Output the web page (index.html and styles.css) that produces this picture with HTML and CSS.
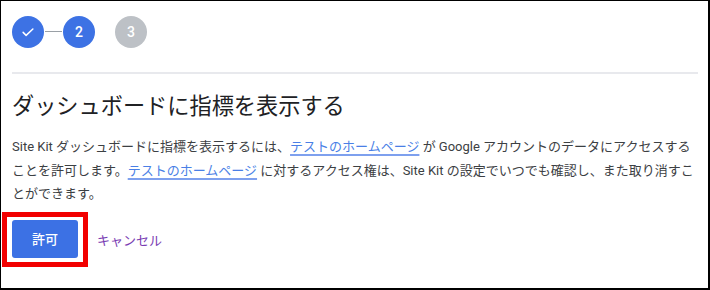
FILE: index.html
```html
<!DOCTYPE html>
<html lang="ja">
<head>
<meta charset="utf-8">
<link rel="stylesheet" href="styles.css">
</head>
<body>
<div class="frame">
  <div class="stepper">
    <div class="step step-done">
      <svg width="18" height="18" viewBox="0 0 24 24"><path d="M5.5 12.5l4 4L18.5 8" fill="none" stroke="#fff" stroke-width="2" stroke-linecap="round" stroke-linejoin="round"/></svg>
    </div>
    <div class="step-line"></div>
    <div class="step step-active">2</div>
    <div class="step step-todo">3</div>
  </div>
  <hr class="divider">
  <h1 class="title">ダッシュボードに指標を表示する</h1>
  <p class="desc">Site Kit ダッシュボードに指標を表示するには、<a class="link" href="#">テストのホームページ</a> が Google アカウントのデータにアクセスすることを許可します。<a class="link" href="#">テストのホームページ</a> に対するアクセス権は、Site Kit の設定でいつでも確認し、また取り消すことができます。</p>
  <div class="actions">
    <div class="highlight"><button class="btn-primary">許可</button></div>
    <a class="cancel" href="#">キャンセル</a>
  </div>
</div>
</body>
</html>
```
FILE: styles.css
```css
html, body { margin: 0; padding: 0; background: #fff; }
.frame {
  width: 710px;
  height: 290px;
  box-sizing: border-box;
  border-left: 1px solid #000;
  border-top: 1px solid #000;
  border-right: 2px solid #000;
  border-bottom: 2px solid #000;
  padding: 14px 10px 0 11px;
  font-family: Roboto, "Noto Sans CJK JP", sans-serif;
  color: #3c4043;
  overflow: hidden;
}
.stepper { display: flex; align-items: center; height: 33px; }
.step {
  width: 32px; height: 32px; border-radius: 50%;
  display: flex; align-items: center; justify-content: center;
  color: #fff; font-size: 14px; font-weight: 500;
}
.step-done, .step-active { background: #3d72e4; }
.step-todo { background: #bdc1c6; margin-left: 20px; }
.step-line { width: 17px; height: 1px; background: #9aa0a6; margin: 0 1px; }
.divider { border: 0; height: 2px; background: #e8e9ed; margin: 24px 0 0 0; }
.title {
  font-family: "Noto Sans CJK JP", sans-serif;
  font-weight: 400; font-size: 22.2px; line-height: 30px;
  color: #202124; margin: 15px 0 0 0;
}
.desc { font-size: 13px; line-height: 23.5px; margin: 16px 0 0 0; }
.link { color: #4a7fe6; text-decoration: underline; text-decoration-color: #7ea0ee; text-underline-offset: 3px; text-decoration-thickness: 1.5px; }
.actions { display: flex; align-items: center; margin-top: 6px; margin-left: -10px; }
.highlight { border: 5px solid #f20000; padding: 3px 5px 4px 5px; display: flex; }
.btn-primary {
  width: 66px; height: 38px; border: 0; border-radius: 3px;
  background: #3c71e4; color: #fff;
  font-family: "Noto Sans CJK JP", sans-serif; font-size: 13px; font-weight: 500;
}
.cancel { color: #7a3db3; text-decoration: none; font-size: 13px; margin-left: 9px; }
```
